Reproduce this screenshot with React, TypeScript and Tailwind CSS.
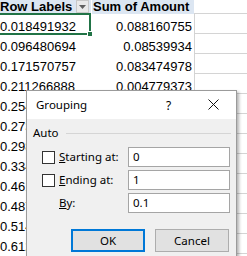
import React from "react";

const rows: [string, string][] = [
  ["0.018491932", "0.088160755"],
  ["0.096480694", "0.08539934"],
  ["0.171570757", "0.083474978"],
  ["0.211266888", "0.004779373"],
  ["0.254817393", "0.071235841"],
  ["0.273912545", "0.066541209"],
  ["0.298106377", "0.052290716"],
  ["0.334521968", "0.045127833"],
  ["0.461280154", "0.039854122"],
  ["0.487013526", "0.031168954"],
  ["0.514426708", "0.027311846"],
  ["0.612054871", "0.019762105"],
  ["0.683390217", "0.012844561"],
];

const Check = () => (
  <div className="w-[13px] h-[13px] border border-[#333333] bg-white shrink-0" />
);

const Field = ({ value }: { value: string }) => (
  <div className="w-[102px] h-[20px] border border-[#a5a5a5] bg-white pl-[4px] flex items-center">
    {value}
  </div>
);

const GroupingDialog = () => {
  return (
    <div className="absolute left-[26px] top-[90px] w-[211px] h-[180px] border border-[#9b9b9b] bg-[#f0f0f0] shadow-[2px_2px_3px_rgba(0,0,0,0.3)] font-['Noto_Sans'] text-[11.5px] text-black">
      <div className="h-[28px] bg-white flex items-center pl-[9px] relative">
        <span>Grouping</span>
        <span className="absolute left-[139px] top-[6px] text-[12px]">?</span>
        <svg
          className="absolute left-[181px] top-[8px]"
          width="11"
          height="11"
          viewBox="0 0 11 11"
        >
          <path d="M0.5 0.5 L10.5 10.5 M10.5 0.5 L0.5 10.5" stroke="#111" strokeWidth="1" />
        </svg>
      </div>
      <div className="pt-[6px]">
        <div className="flex items-center h-[16px]">
          <span className="ml-[6px]">Auto</span>
          <div className="flex-1 h-px bg-[#d5d5d5] ml-[7px] mr-[5px]" />
        </div>
        <div className="mt-[6px] flex flex-col gap-[3px]">
          <div className="flex items-center">
            <div className="w-[101px] flex items-center pl-[15px] gap-[4px]">
              <Check />
              <span>
                <span className="underline">S</span>tarting at:
              </span>
            </div>
            <Field value="0" />
          </div>
          <div className="flex items-center">
            <div className="w-[101px] flex items-center pl-[15px] gap-[4px]">
              <Check />
              <span>
                <span className="underline">E</span>nding at:
              </span>
            </div>
            <Field value="1" />
          </div>
          <div className="flex items-center">
            <div className="w-[101px] pl-[32px]">
              <span className="underline">B</span>y:
            </div>
            <Field value="0.1" />
          </div>
        </div>
        <div className="mt-[16px] flex gap-[10px] pl-[44px]">
          <button className="w-[74px] h-[23px] border-2 border-[#0078d7] bg-[#e1e1e1] flex items-center justify-center">
            OK
          </button>
          <button className="w-[74px] h-[23px] border border-[#adadad] bg-[#e1e1e1] flex items-center justify-center">
            Cancel
          </button>
        </div>
      </div>
    </div>
  );
};

const App = () => {
  return (
    <div className="relative w-[247px] h-[256px] overflow-hidden bg-white font-['Liberation_Sans'] text-[13px] text-black">
      <div className="flex h-[14px] leading-[14px]">
        <div className="w-[92px] flex bg-[#dce6f2] border-r border-white">
          <span className="font-bold flex-1">Row Labels</span>
          <div className="w-[13px] h-[13px] mr-[2px] bg-[#e9e9e9] border border-[#c8c8c8] flex items-center justify-center">
            <svg width="7" height="4" viewBox="0 0 7 4">
              <path d="M0 0 L7 0 L3.5 4 Z" fill="#5f5f5f" />
            </svg>
          </div>
        </div>
        <div className="w-[102px] bg-[#dce6f2] pl-[1px] font-bold">Sum of Amount</div>
        <div className="flex-1 border-b border-[#d4d4d4]" />
      </div>
      {rows.map(([a, b], i) => (
        <div key={i} className="flex h-[20px] leading-[14px]">
          <div className="w-[92px] flex items-end">{a}</div>
          <div className="w-[102px] flex items-end justify-end pr-[2px]">{b}</div>
          <div className="flex-1 border-l border-b border-[#d4d4d4]" />
        </div>
      ))}
      <div className="absolute left-[-2px] top-[13px] w-[93px] h-[22px] border-2 border-[#217346]" />
      <div className="absolute left-[87px] top-[31px] w-[6px] h-[6px] bg-[#217346] border border-white" />
      <GroupingDialog />
    </div>
  );
};

export default App;
